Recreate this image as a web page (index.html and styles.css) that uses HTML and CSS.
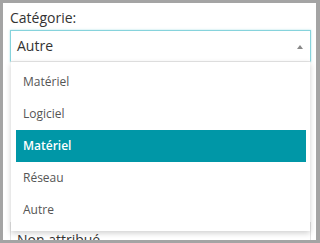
FILE: index.html
```html
<!DOCTYPE html>
<html lang="fr">
<head>
<meta charset="utf-8">
<link rel="stylesheet" href="styles.css">
</head>
<body>
<div class="panel">
  <div class="field">
    <div class="label">Catégorie:</div>
    <div class="select-wrap">
      <div class="select open">
        <span class="value">Autre</span>
        <span class="arrow"></span>
      </div>
      <ul class="dropdown">
        <li class="option">Matériel</li>
        <li class="option">Logiciel</li>
        <li class="option active">Matériel</li>
        <li class="option">Réseau</li>
        <li class="option">Autre</li>
      </ul>
    </div>
  </div>
  <div class="field next">
    <div class="select plain">
      <span class="value">Non attribué</span>
    </div>
  </div>
</div>
</body>
</html>
```
FILE: styles.css
```css
html, body {
  margin: 0;
  padding: 0;
}
body {
  background: #a4a4a4;
  font-family: "Open Sans", "Liberation Sans", sans-serif;
  color: #333;
  padding: 3px 4px 3px 3px;
  height: 243px;
  box-sizing: border-box;
}
.panel {
  background: #fff;
  height: 237px;
  overflow: hidden;
  padding: 5px 5px 0 7px;
  box-sizing: border-box;
}
.label {
  font-size: 14px;
  line-height: 20px;
  color: #333;
  margin-bottom: 2px;
}
.select-wrap {
  position: relative;
}
.select {
  height: 32px;
  box-sizing: border-box;
  border: 1px solid #e3e3e3;
  display: flex;
  align-items: center;
  justify-content: space-between;
  padding: 0 7px 0 6px;
  font-size: 14px;
  line-height: 30px;
  color: #333;
  background: #fff;
}
.select.open {
  border-color: #86d3dc;
  border-bottom-color: #e6e6e6;
  box-shadow: 0 0 2px rgba(102, 200, 212, 0.55);
}
.arrow {
  width: 0;
  height: 0;
  border-left: 3px solid transparent;
  border-right: 3px solid transparent;
  border-bottom: 4px solid #888;
  margin-top: 2px;
}
.dropdown {
  position: absolute;
  left: 1px;
  right: 1px;
  top: 32px;
  margin: 0;
  padding: 4px 4px 5px 5px;
  list-style: none;
  background: #fff;
  box-shadow: 0 2px 6px rgba(0, 0, 0, 0.2);
  z-index: 2;
}
.option {
  height: 32px;
  line-height: 32px;
  font-size: 12px;
  color: #555;
  padding-left: 7px;
}
.option.active {
  background: #0097a7;
  color: #fff;
  font-weight: 600;
}
.field.next {
  margin-top: 160px;
}
.select.plain {
  align-items: flex-start;
  line-height: 20px;
  padding-top: 7px;
}
```
